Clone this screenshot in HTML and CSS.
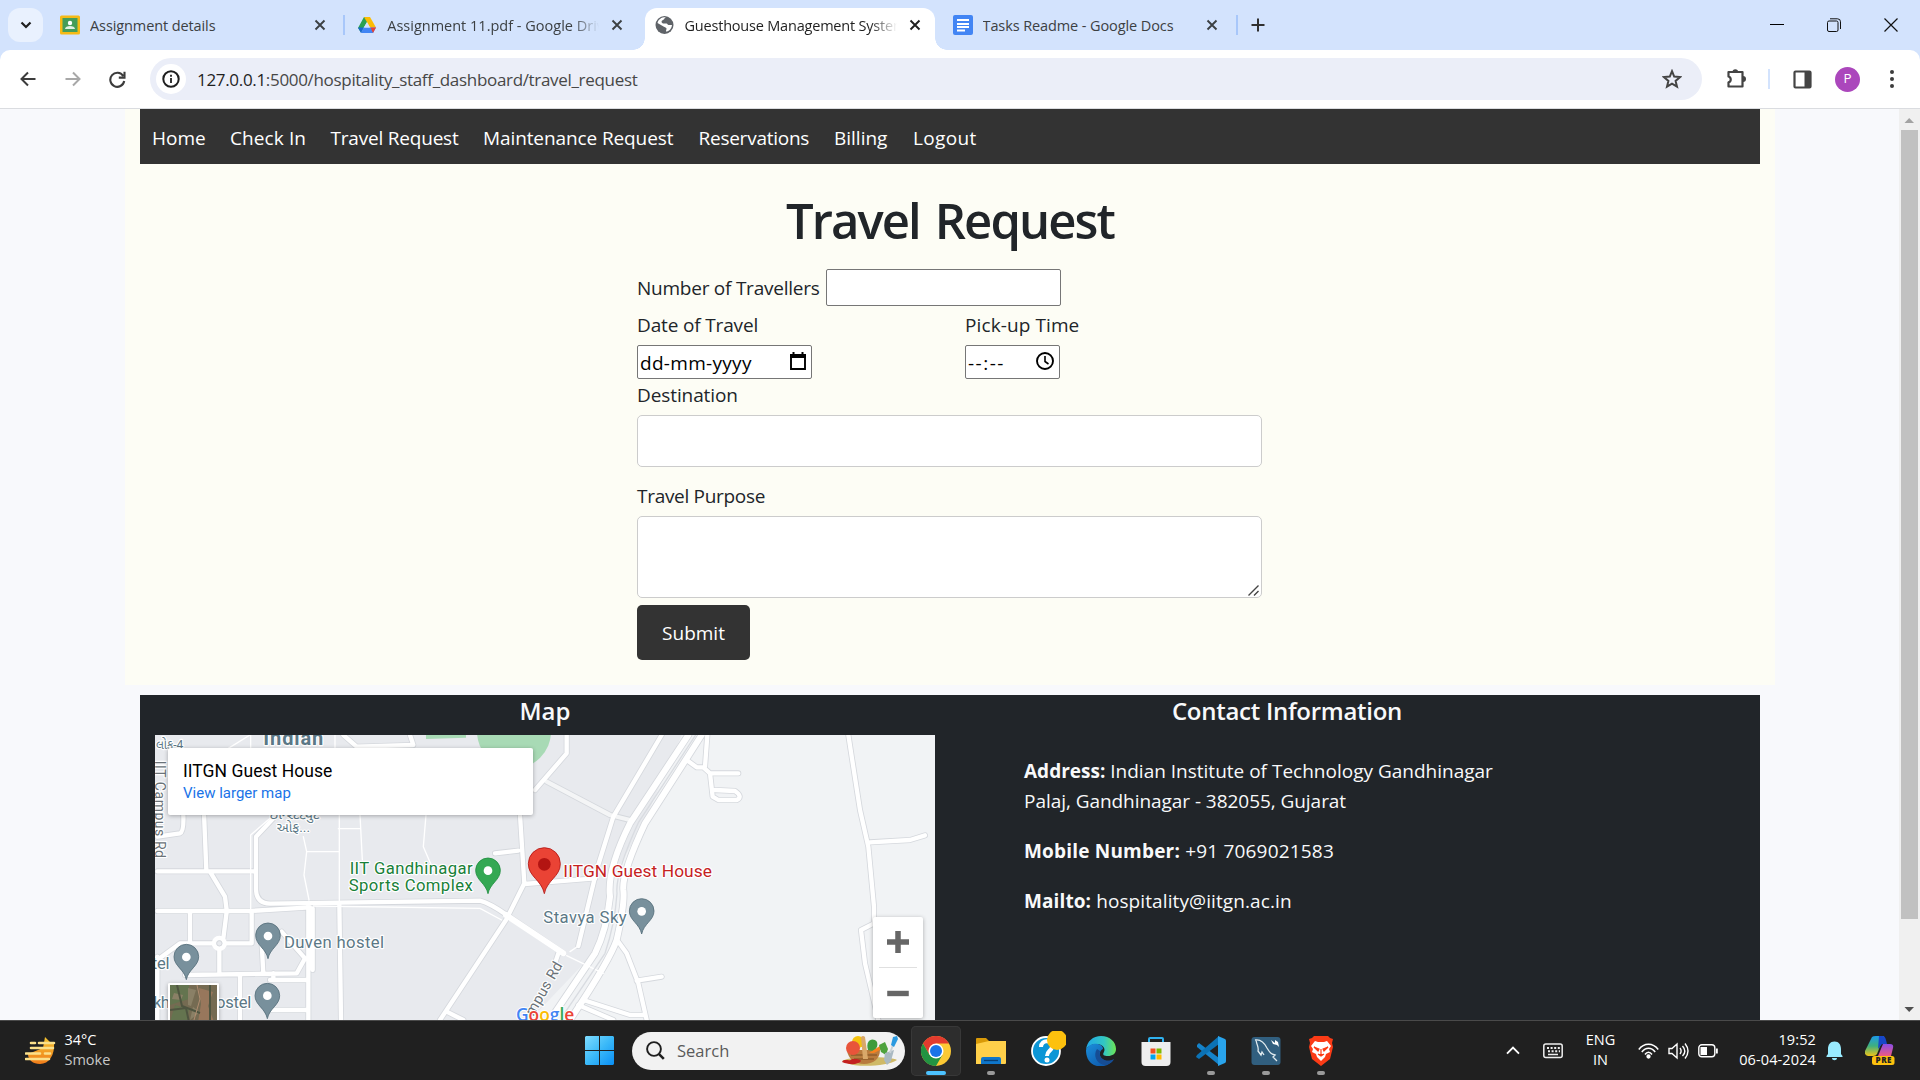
FILE: index.html
```html
<!DOCTYPE html>
<html lang="en">
<head>
<meta charset="utf-8">
<title>Guesthouse Management System</title>
<link rel="stylesheet" href="styles.css">
</head>
<body>
<div class="screen">
  <header class="tabstrip">
    <div class="tab-search"><svg width="12" height="8" viewBox="0 0 12 8"><path d="M1.5 1.5 6 6l4.500-4.500" fill="none" stroke="#1f1f1f" stroke-width="2.200"/></svg></div>
    <div class="tab">
      <svg class="fav" width="20" height="20" viewBox="0 0 20 20"><rect width="20" height="19" y=".5" rx="1.500" fill="#f5ba15"/><rect x="2.500" y="3" width="15" height="14" fill="#459d58"/><circle cx="10" cy="8" r="2.200" fill="#fff"/><path d="M5 14c0-4 10-4 10 0z" fill="#e3f1e5"/></svg>
      <span class="tab-title t1">Assignment details</span>
      <svg class="x" viewBox="0 0 12 12"><path d="M1.500 1.500l9 9M10.500 1.500l-9 9"/></svg>
    </div>
    <div class="tab sep">
      <svg class="fav" width="20" height="20" viewBox="0 0 20 20"><path d="M7 2h6l-6 10-3 5.500L1 13z" fill="#2aa150"/><path d="M7 2h6l6 10.500h-6z" fill="#fbbc04"/><path d="M6.600 12.500H19L16 18H4z" fill="#4285f4"/><path d="M1 12.500h5.600L4 18z" fill="#1967d2"/><path d="M13.500 12.500H19L16 18z" fill="#ea4335"/><path d="M10 7.200l3 5.300H7z" fill="#d3e3fd"/></svg>
      <span class="tab-title fade t2">Assignment 11.pdf - Google Drive</span>
      <svg class="x" viewBox="0 0 12 12"><path d="M1.500 1.500l9 9M10.500 1.500l-9 9"/></svg>
    </div>
    <div class="tab active">
      <svg class="fav" width="20" height="20" viewBox="0 0 20 20"><circle cx="9.500" cy="10" r="9" fill="#5f6368"/><path d="M11 2c-2 1-1 2-3 3-2 .5-2 3 0 3.500h3.500c1 0 1 1.500 2 1.500h3.500c-.5 4-3 6.500-6 6.500 0-2 1.500-3-.5-4l-2-1-6-3.500C3 5 6 2 11 2z" fill="#fff"/><path d="M9 6.500c1-1 2-1 3-3l2.500 1.500-1.500 3-2-.5z" fill="#5f6368"/></svg>
      <span class="tab-title fade t3">Guesthouse Management System</span>
      <svg class="x dark" viewBox="0 0 12 12"><path d="M1.500 1.500l9 9M10.500 1.500l-9 9"/></svg>
    </div>
    <div class="tab last">
      <svg class="fav" width="20" height="20" viewBox="0 0 20 20"><rect width="20" height="20" rx="2" fill="#4285f4"/><path d="M4 5h12M4 9h12M4 12h12M4 15.500h8" stroke="#fff" stroke-width="1.900"/></svg>
      <span class="tab-title t4">Tasks Readme - Google Docs</span>
      <svg class="x" viewBox="0 0 12 12"><path d="M1.500 1.500l9 9M10.500 1.500l-9 9"/></svg>
    </div>
    <div class="newtab sep"><svg width="14" height="14" viewBox="0 0 14 14"><path d="M7 .5v13M.5 7h13" stroke="#303030" stroke-width="2"/></svg></div>
    <div class="wincontrols">
      <svg width="14" height="14" viewBox="0 0 14 14"><path d="M0 6.500h14" stroke="#000"/></svg>
      <svg width="14" height="14" viewBox="0 0 14 14" fill="none" stroke="#111"><rect x=".5" y="3" width="10.500" height="10.500" rx="1.500"/><path d="M3 .8h7.500a3 3 0 0 1 3 3V11"/></svg>
      <svg width="14" height="14" viewBox="0 0 14 14"><path d="M.5.5l13 13M13.500.5l-13 13" stroke="#111" stroke-width="1.200"/></svg>
    </div>
  </header>

  <div class="toolbar-bg">
  <div class="toolbar">
    <div class="navicons">
      <svg width="16" height="16" viewBox="0 0 16 16" fill="none" stroke="#3c3c3c" stroke-width="2"><path d="M15.500 8H2M8 1.500 1.500 8 8 14.500"/></svg>
      <svg width="16" height="16" viewBox="0 0 16 16" fill="none" stroke="#a8a8a8" stroke-width="2"><path d="M.5 8H14M8 1.500 14.500 8 8 14.500"/></svg>
      <svg width="17" height="17" viewBox="0 0 17 17" fill="none" stroke="#3c3c3c" stroke-width="2.100"><path d="M14.200 5A7 7 0 1 0 15.200 10M15.500.8v5.800H9.800"/></svg>
    </div>
    <div class="omnibox">
      <div class="info"><svg width="18" height="18" viewBox="0 0 18 18"><circle cx="9" cy="9" r="7.700" fill="none" stroke="#1f1f1f" stroke-width="2"/><path d="M9 8v5M9 4.700v2" stroke="#1f1f1f" stroke-width="1.800"/></svg></div>
      <span class="url"><b>127.0.0.1</b>:5000/hospitality_staff_dashboard/travel_request</span>
      <svg class="star" width="20" height="20" viewBox="0 0 20 20"><path d="M10 2.200l2.200 5.400 5.900.5-4.500 3.800 1.400 5.800L10 14.700l-5 3 1.400-5.800L1.900 8.100l5.900-.5z" fill="none" stroke="#444" stroke-width="2"/></svg>
    </div>
    <svg class="puzzle" width="22" height="22" viewBox="0 0 22 22"><path d="M3.500 4h14v14.500h-14v-4.200a3 3 0 0 0 0-5.800z" fill="none" stroke="#444" stroke-width="2.200" stroke-linejoin="round"/><path d="M7.500 4a2.800 2.800 0 0 1 5.600 0zM18 8a2.800 2.800 0 0 1 0 6z" fill="#444"/></svg>
    <i class="tsep"></i>
    <svg class="panel" width="19" height="19" viewBox="0 0 19 19"><rect x="1.500" y="1.500" width="16" height="16" rx="1" fill="none" stroke="#444" stroke-width="2.200"/><path d="M11.500 1h6v17h-6z" fill="#444"/></svg>
    <span class="avatar">P</span>
    <svg class="dots" width="4" height="18" viewBox="0 0 4 18"><g fill="#3c3c3c"><circle cx="2" cy="2" r="2"/><circle cx="2" cy="9" r="2"/><circle cx="2" cy="16" r="2"/></g></svg>
  </div>
  </div>

  <div class="viewport">
    <div class="page">
      <main class="container">
        <nav class="nav">
          <a class="n1">Home</a><a class="n2">Check In</a><a class="n3">Travel Request</a><a class="n4">Maintenance Request</a><a class="n5">Reservations</a><a class="n6">Billing</a><a class="n7">Logout</a>
        </nav>
        <h1>Travel Request</h1>
        <form class="form">
          <div class="row"><label class="l1">Number of Travellers</label><input class="num" type="text"></div>
          <div class="pair">
            <div>
              <label class="l2">Date of Travel</label>
              <div class="native date"><span class="dval">dd-mm-yyyy</span><svg width="18" height="20" viewBox="0 0 18 20"><path d="M2 4h14v14H2z" fill="none" stroke="#000" stroke-width="1.900"/><path d="M1 3h16v4H1zM3.500 1h2v3h-2zM12.500 1h2v3h-2z"/></svg></div>
            </div>
            <div>
              <label class="l3">Pick-up Time</label>
              <div class="native time"><span class="tval">--:--</span><svg width="20" height="20" viewBox="0 0 20 20" fill="none" stroke="#000" stroke-width="1.900"><circle cx="10" cy="10" r="8"/><path d="M10 5v5.500l3.500 2.500" stroke-width="1.600"/></svg></div>
            </div>
          </div>
          <label class="l4">Destination</label>
          <input class="field" type="text">
          <label class="l5 purpose">Travel Purpose</label>
          <div class="areawrap">
            <textarea class="field area"></textarea>
            <svg class="grip" width="11" height="11" viewBox="0 0 11 11"><path d="M.5 10.500l10-10M6 10.500l4.500-4.500" stroke="#444" stroke-width="1.400"/></svg>
          </div>
          <button class="submit" type="button">Submit</button>
        </form>
      </main>

      <footer class="footer">
        <section class="mapcol">
          <h5 class="h-map">Map</h5>
          <div class="map">
            <svg class="mapsvg" viewBox="75 135 2340 855" preserveAspectRatio="none">
              <rect x="75" y="135" width="2340" height="855" fill="#f1f3f5"/>
              <path d="M75 135H1655L1540 400 1450 560 1400 780 1200 990H75z" fill="#e8eaee"/>
              <path d="M888 135h120v8l-120 4z" fill="#a8dab5"/>
              <circle cx="1152" cy="125" r="111" fill="#a8dab5"/>
              <g class="road-edge">
                <path d="M82 440L150 430Q162 425 160 375M222 370L229 540M82 544H375M240 545L285 620 290 660M430 385L378 440V600Q380 640 420 641L1050 632Q1080 640 1130 675L1300 790M82 663H360L540 652M180 665V760M290 665L280 745M268 775V850M165 855L500 850 525 805 455 725M365 665V760H150L82 810M395 760L400 850M535 640V990M548 655V840M628 640L633 990M420 870H530M330 860V990M82 800V990M1170 375L1183 580 1128 690 930 990M1095 490L1165 482M1183 582L1395 565M1310 135V190L1215 300M640 135L680 170 850 165 840 135M950 965L1000 990M430 850V870M415 960H535M1250 275L1440 375 1500 390"/>
                <path d="M1595 135L1450 380 1400 540 1345 768M1670 210L1700 232H1720L1740 250H1825M1732 135L1725 230M1740 250L1748 320 1765 330H1820Q1840 320 1815 303L1755 300M2155 135L2190 360 2215 470 2232 650V700L2193 720 2205 820 2245 990M2220 457L2340 450 2385 436M1465 755L1490 790 1525 880 1550 990M1520 872L1595 860M1275 820L1285 790M1360 930L1500 975H1540M1345 945L1450 990"/>
                <path stroke-width="23" d="M1675 135L1500 400Q1430 540 1440 620 1430 720 1395 790L1260 990M1715 135L1545 400Q1475 550 1480 600 1485 640 1460 750 1440 810 1320 990"/>
              </g>
              <g class="road">
                <path stroke="#f4f5f6" d="M1250 275L1440 375 1500 390"/>
                <path d="M82 440L150 430Q162 425 160 375M222 370L229 540M82 544H375M240 545L285 620 290 660M430 385L378 440V600Q380 640 420 641L1050 632Q1080 640 1130 675M82 663H360L540 652M180 665V760M290 665L280 745M268 775V850M165 855L500 850 525 805 455 725M365 665V760H150L82 810M395 760L400 850M535 640V990M548 655V840M628 640L633 990M420 870H530M330 860V990M82 800V990M1170 375L1183 580 1128 690 930 990M1095 490L1165 482M1183 582L1395 565M1310 135V190L1215 300M640 135L680 170 850 165 840 135M950 965L1000 990M430 850V870M415 960H535"/>
                <path d="M1595 135L1450 380 1400 540 1345 768M1732 135L1725 230M1670 210L1700 232H1720L1740 250H1825M1740 250L1748 320 1765 330H1820Q1840 320 1815 303L1755 300M2155 135L2190 360 2215 470 2232 650V700L2193 720 2205 820 2245 990M2220 457L2340 450 2385 436M1465 755L1490 790 1525 880 1550 990M1520 872L1595 860M1275 820L1285 790M1360 930L1500 975H1540M1345 945L1450 990"/>
                <path stroke-width="18" d="M1128 675L1300 790M1675 135L1500 400Q1430 540 1440 620 1430 720 1395 790L1260 990M1715 135L1545 400Q1475 550 1480 600 1485 640 1460 750 1440 810 1320 990"/>
                <path stroke-width="4" d="M628 375V640M690 375L697 510M625 416H690M520 440L530 485H625M530 485L522 555 537 630M888 375L880 470 910 540M362 665V435L420 385M362 135V175M615 135V175M360 135L295 175M550 648L1050 655 1115 690M1310 797L1420 850M1320 785L1345 768"/>
              </g>
              <circle cx="268" cy="760" r="16" fill="#e8eaee" stroke="#fff" stroke-width="14"/>
              <circle cx="268" cy="760" r="8" fill="#e8eaee" stroke="#d5d8dd" stroke-width="3"/>
              <path d="M1697 135L1525 398Q1455 550 1461 610 1455 700 1425 790L1290 990" fill="none" stroke="#d9dce1" stroke-width="4"/>
              <g class="lbl slate">
                <text x="400" y="166" font-size="60" font-weight="700" textLength="180">Indian</text>
                <text x="78" y="177" font-size="38" textLength="82" lengthAdjust="spacingAndGlyphs">લોક-4</text>
                <text x="418" y="387" font-size="38" textLength="150" lengthAdjust="spacingAndGlyphs">ઇન્સ્ટિટ્યુટ</text>
                <text x="440" y="426" font-size="40" textLength="100" lengthAdjust="spacingAndGlyphs">ઓફ...</text>
                <text x="462" y="773" font-size="50" textLength="300">Duven hostel</text>
                <text x="65" y="836" font-size="50" textLength="54">tel</text>
                <text x="70" y="954" font-size="50" textLength="50">kh</text>
                <text x="258" y="954" font-size="50" textLength="106">ostel</text>
                <text x="1240" y="700" font-size="50" textLength="250">Stavya Sky</text>
              </g>
              <g class="lbl gray">
                <text transform="translate(74 212) rotate(90)" font-size="42" textLength="292">IIT Campus Rd</text>
                <text transform="translate(1210 980) rotate(-60)" font-size="44" textLength="178">mpus Rd</text>
              </g>
              <g class="lbl green">
                <text x="659" y="552" font-size="50" textLength="369">IIT Gandhinagar</text>
                <text x="656" y="604" font-size="50" textLength="372">Sports Complex</text>
              </g>
              <g class="lbl red"><text x="1300" y="561" font-size="52" textLength="446">IITGN Guest House</text></g>
              <g fill="#78909c" stroke="#546e7a" stroke-width="2.500">
                <path d="M414 806C408 775 377 765 377 736a37 37 0 0 1 74 0C451 765 420 775 414 806z"/>
                <path d="M169 869C163 838 132 828 132 800a37 37 0 0 1 74 0C206 828 175 838 169 869z"/>
                <path d="M412 986C406 955 375 945 375 917a37 37 0 0 1 74 0C449 945 418 955 412 986z"/>
                <path d="M1535 732C1529 701 1498 691 1498 663a37 37 0 0 1 74 0C1572 691 1541 701 1535 732z"/>
              </g>
              <path d="M1074 611C1068 580 1037 570 1037 541a37 37 0 0 1 74 0C1111 570 1080 580 1074 611z" fill="#34a853" stroke="#1e8e3e" stroke-width="2.500"/>
              <path d="M1243 611C1235 570 1195 560 1195 521a48 48 0 0 1 96 0C1291 560 1251 570 1243 611z" fill="#ea4335" stroke="#b31412" stroke-width="2.500"/>
              <circle cx="1243" cy="523" r="19" fill="#b31412"/>
              <g fill="#fff"><circle cx="414" cy="738" r="13"/><circle cx="169" cy="801" r="13"/><circle cx="412" cy="917" r="13"/><circle cx="1535" cy="664" r="13"/><circle cx="1074" cy="542" r="13"/></g>
              <text class="google" x="1158" y="993" font-size="56" textLength="175" lengthAdjust="spacingAndGlyphs"><tspan fill="#4285f4">G</tspan><tspan fill="#ea4335">o</tspan><tspan fill="#fbbc04">o</tspan><tspan fill="#4285f4">g</tspan><tspan fill="#34a853">l</tspan><tspan fill="#ea4335">e</tspan></text>
            </svg>
            <div class="card"><div class="place">IITGN Guest House</div><div class="larger">View larger map</div></div>
            <div class="sat"><svg width="47" height="37" viewBox="0 0 47 37"><rect width="47" height="37" fill="#756b52"/><path d="M0 0h19v14L0 20zM5 20l14 4-2 13H0z" fill="#64744f"/><path d="M29 3l14 4-5 14 6 16H28l3-18z" fill="#98775c"/><path d="M18 3l8 2-5 16-3-1zM4 8l9 2-2 5-9-1zM23 22l7 5-10 8z" fill="#8a8066"/><path d="M0 25l16-2 3 14M40 0v37M7 0l5 21 18 7" stroke="#4f5540" stroke-width="2" fill="none"/><path d="M27 0l3 14-6 21" stroke="#b08d70" fill="none"/></svg></div>
            <div class="zoomctl">
              <svg width="50" height="50" viewBox="0 0 50 50"><path d="M25 14v22M14 25h22" stroke="#666" stroke-width="5.500"/></svg>
              <svg class="minus" width="38" height="50" viewBox="0 0 38 50"><path d="M8 26h22" stroke="#666" stroke-width="5.500"/></svg>
            </div>
          </div>
        </section>
        <section class="contact">
          <h5 class="h-contact">Contact Information</h5>
          <div class="info-text">
            <p><span class="c1"><b>Address:</b> Indian Institute of Technology Gandhinagar</span><br><span class="c2">Palaj, Gandhinagar - 382055, Gujarat</span></p>
            <p class="c3"><b>Mobile Number:</b> +91 7069021583</p>
            <p class="c4"><b>Mailto:</b> hospitality@iitgn.ac.in</p>
          </div>
        </section>
      </footer>
    </div>
    <div class="scrollbar">
      <svg width="21" height="21" viewBox="0 0 21 21"><path d="M5.500 14h9.500L10.200 9z" fill="#a3a3a3"/></svg>
      <div class="thumb"></div>
      <svg width="21" height="21" viewBox="0 0 21 21"><path d="M5.500 8h9.500l-4.800 5z" fill="#505050"/></svg>
    </div>
  </div>

  <div class="taskbar">
    <div class="weather">
      <svg width="31" height="30" viewBox="0 0 31 30"><defs><linearGradient id="sun" x2="0" y2="1"><stop stop-color="#f4c430"/><stop offset="1" stop-color="#f07c1a"/></linearGradient></defs><path d="M20 1l5 5 4 1c1 12-5 21-14 21C8 28 3 24 3 18l15-6z" fill="url(#sun)"/><path d="M6 7h4M14 7h15M6 12h22M1 17.500h14M20 17.500h5M1 23h23" stroke="#fbe08a" stroke-width="2.600" stroke-linecap="round"/></svg>
      <div class="wtext"><div class="w1">34°C</div><div class="w2">Smoke</div></div>
    </div>
    <div class="center">
      <svg class="start" width="29" height="29" viewBox="0 0 29 29"><defs><linearGradient id="win" x2="1" y2="1"><stop stop-color="#7fdcff"/><stop offset=".5" stop-color="#3bb9f8"/><stop offset="1" stop-color="#0a8ff5"/></linearGradient></defs><path d="M1 0h13v14H0V1zM15 0h13l1 1v13H15zM0 15h14v14H1l-1-1zM15 15h14v13l-1 1H15z" fill="url(#win)"/></svg>
      <div class="search">
        <svg width="19" height="19" viewBox="0 0 19 19" fill="none" stroke="#1f1f1f"><circle cx="8" cy="8" r="6.900" stroke-width="1.900"/><path d="M12.800 12.800l5 5" stroke-width="2.600"/></svg>
        <span class="stext">Search</span>
        <svg width="57" height="32" viewBox="0 0 57 32"><path d="M1 26c12-6 50-4 55-1-8 6-40 8-50 3z" fill="#cfb967"/><ellipse cx="17" cy="7" rx="6" ry="6" fill="#f4c20d"/><path d="M6 15h33c0 9-7 14-16 14S7 24 6 15z" fill="#b87b3e"/><path d="M10 20h26M13 24h20" stroke="#7d4e20"/><circle cx="12" cy="13" r="7" fill="#e8543a"/><path d="M27 15c-3-10 5-13 9-8 1 3 0 7-4 9z" fill="#3f9b3c"/><path d="M28 18l14-9 3 3-12 6z" fill="#f58220"/><path d="M22 24L20 2q2-2 4 0l3 22z" fill="#d9a86a"/><path d="M38 10l6-3 3 7-2 6-5-3z" fill="#4ea23d"/><path d="M44 18l9-3-3 11-4 4-3-5z" fill="#aab9c2"/><path d="M49 18l3-8" stroke="#c8d1d6" stroke-width="2"/><path d="M50 10l2-8 4-1 1 3-4 8z" fill="#2b9ae0"/><path d="M1 27c2-4 8 0 10-3 4 0 8 0 9 2-3 4-12 4-19 1z" fill="#c3201f"/></svg>
      </div>
      <div class="app chrome"><svg width="30" height="30" viewBox="0 0 30 30"><circle cx="15" cy="15" r="15" fill="#fcc934"/><path d="M2 7.500A15 15 0 0 1 28 7.500H15L8.500 18.750z" fill="#e33b2e"/><path d="M2 7.500A15 15 0 0 0 15 30l6.500-11.250L15 22 8.500 18.750z" fill="#229342"/><circle cx="15" cy="15" r="7.500" fill="#fff"/><circle cx="15" cy="15" r="6" fill="#1a73e8"/></svg><i class="bar"></i></div>
      <div class="app"><svg width="30" height="30" viewBox="0 0 30 30"><path d="M0 3q0-1 1-1h9l3 3v6H0z" fill="#d99a08"/><path d="M0 8l13-3h17v22q0 1-1 1H0z" fill="#ffd04a"/><path d="M5 28v-5q0-2 2-2h16q2 0 2 2v5z" fill="#0f76ca"/><path d="M8 24.500h14" stroke="#073f74" stroke-width="1.300"/></svg><i class="dot"></i></div>
      <div class="app"><svg width="40" height="40" viewBox="-5 -5 40 40"><circle cx="15" cy="15" r="14" fill="#0c96d6" stroke="#fff" stroke-width="1.800"/><path d="M10 11c0-8 12-7 11 0-.5 4-5 4-5 9" fill="none" stroke="#fff" stroke-width="4"/><circle cx="16" cy="24" r="2.500" fill="#fff"/><circle cx="26" cy="4" r="10" fill="#fdc10e"/></svg></div>
      <div class="app"><svg width="30" height="30" viewBox="0 0 30 30"><defs><linearGradient id="ed" x2="1"><stop stop-color="#20a7e8"/><stop offset=".6" stop-color="#32c6c4"/><stop offset="1" stop-color="#6de454"/></linearGradient><linearGradient id="ed2" x2="1" y2="1"><stop stop-color="#1b8fdc"/><stop offset="1" stop-color="#0b4da0"/></linearGradient></defs><path d="M0 14C1 5 7 0 15 0c9 0 15 6 15 13 0 5-4 7-8 7s-6-1-4-4c2-4-2-8-7-8-6 0-10 3-11 6z" fill="url(#ed)"/><path d="M0 14c2-5 7-7 12-6 4 1 5 3 5 5-5 2-5 12 6 12 2 0 4-1 5-2-6 9-16 8-20 6C2 26 0 20 0 14z" fill="url(#ed2)"/><path d="M11 13c-4 6-1 14 7 16 4 0 8-2 10-6-7 4-16 0-14-8z" fill="#164d94"/></svg></div>
      <div class="app"><svg width="30" height="30" viewBox="0 0 30 30"><path d="M8 8V3q0-1 1-1h12q1 0 1 1v5" fill="none" stroke="#2fb1ee" stroke-width="2"/><path d="M.5 6h29v20q0 4-4 4h-21q-4 0-4-4z" fill="#eee"/><path d="M9.500 12.500h5v5h-5z" fill="#f25022"/><path d="M15.500 12.500h5v5h-5z" fill="#7fba00"/><path d="M9.500 18.500h5v5h-5z" fill="#00a4ef"/><path d="M15.500 18.500h5v5h-5z" fill="#ffb900"/></svg></div>
      <div class="app"><svg width="30" height="30" viewBox="0 0 30 30"><path d="M1 9l2-2 20 15v7L1 11z" fill="#1583ca"/><path d="M1 19l22-19v8L3 23l-3-2z" fill="#0b72b5"/><path d="M22 0l7 3q1 .5 1 2v20q0 1.500-1 2l-7 3z" fill="#29a4ec"/></svg><i class="dot"></i></div>
      <div class="app"><svg width="30" height="30" viewBox="0 0 30 30"><rect x=".5" y="1" width="29" height="28" rx="3" fill="#315f7f"/><path d="M4 4c5-1 9 2 12 8 3 5 4 6 8 7l-2 2 4 4M5 4c1 6 3 7 2 11l3 4 1-3 2 3" fill="none" stroke="#e1ebef" stroke-width="1.300"/><path d="M20 4l2 4 4 1 2 2-1-5-3-2v3z" fill="#fff"/></svg><i class="dot"></i></div>
      <div class="app"><svg width="30" height="30" viewBox="0 0 30 30"><path d="M8 0h14l2 2 3 1-1 4 1 4-3 12-9 7-9-7L3 11l1-4-1-4 3-1z" fill="#fb3b16"/><path d="M9 5l3 1h6l3-1 4 5-2 3 1 3-4 2-1 3-4 4-4-4-1-3-4-2 1-3-2-3z" fill="#fff"/><path d="M8 11l5 2-1 2zM22 11l-5 2 1 2zM15 13v5M12 18l3 2 3-2" fill="#fb3b16" stroke="#fb3b16" stroke-width="1.200"/></svg><i class="dot"></i></div>
    </div>
    <div class="tray">
      <svg class="chev" width="14" height="9" viewBox="0 0 14 9"><path d="M1 7.700l6-6 6 6" fill="none" stroke="#fff" stroke-width="1.900"/></svg>
      <svg class="kb" width="20" height="16" viewBox="0 0 20 16"><rect x=".8" y="1" width="18.400" height="13.500" rx="2" fill="none" stroke="#eee" stroke-width="1.500"/><path d="M4 5h13M5 8.200h12" stroke="#eee" stroke-width="2" stroke-dasharray="2 1.600"/><path d="M5 11.500h10" stroke="#eee" stroke-width="1.500"/></svg>
      <div class="lang"><div>ENG</div><div>IN</div></div>
      <svg class="wifi" width="21" height="16" viewBox="0 0 21 16" fill="none" stroke="#fff" stroke-width="1.500"><path d="M.8 6.500C6-.5 15-.5 20.200 6.500M3.800 9c4-5 9.500-5 13.400 0M7 11.500c2-3 5-3 7 0"/><circle cx="10.500" cy="13.500" r="1.400" fill="#fff"/></svg>
      <svg class="spk" width="21" height="18" viewBox="0 0 21 18" fill="none" stroke="#fff" stroke-width="1.400"><path d="M1 6.500h3l5-4.500v14L4 11.500H1zM12 6c1.500 2 1.500 4 0 6M14.500 4c3 3.500 3 7 0 10M17 1.500c4 5 4 10 0 15"/></svg>
      <svg class="bat" width="20" height="14" viewBox="0 0 20 14"><rect x=".8" y=".8" width="16" height="12" rx="3" fill="none" stroke="#fff" stroke-width="1.400"/><path d="M2.500 3h6.500v8H2.500zM18 4.500h1.800v5H18z" fill="#fff"/></svg>
      <div class="clock"><div class="k1">19:52</div><div class="k2">06-04-2024</div></div>
      <svg class="bell" width="17" height="20" viewBox="0 0 17 20"><path d="M8.500.5C4 .5 2 4 2 8v5L.5 15v1h16v-1L15 13V8c0-4-2-7.500-6.500-7.500zM6 17h5c0 3-5 3-5 0z" fill="#99ebff"/></svg>
      <svg class="copilot" width="30" height="29" viewBox="0 0 30 29"><defs><linearGradient id="cp" x2="0" y2="1"><stop stop-color="#1c9bea"/><stop offset=".5" stop-color="#3fb07d"/><stop offset="1" stop-color="#f0c419"/></linearGradient><linearGradient id="cp2" x2="0" y2="1"><stop stop-color="#8a4de8"/><stop offset="1" stop-color="#ee5a80"/></linearGradient></defs><path d="M7 1q1-1 4-1h8L12 18q-1 2-4 2H3q-4-1-3-5z" fill="url(#cp)"/><path d="M14 0h4q2 0 3 4l1 4h-5l-4 5z" fill="#1747c9"/><path d="M18 8h7q4 0 3 4l-2 8H13z" fill="url(#cp2)"/><rect x="7" y="20" width="22.500" height="9" rx="2.500" fill="#fdc10e"/><text class="pre" x="10.500" y="27.300" textLength="16">PRE</text></svg>
    </div>
  </div>
</div>
</body>
</html>
```
FILE: styles.css
```css
* { box-sizing: border-box; }
body { margin: 0; font-family: "Open Sans", "Noto Sans", sans-serif; }
svg { display: block; flex: none; }
.screen { width: 1920px; height: 1080px; overflow: hidden; display: flex; flex-direction: column; }

/* Browser tab strip */
.tabstrip { height: 50px; flex: none; background: #d3e3fd; display: flex; align-items: center; padding-left: 8px; }
.tab-search { width: 35px; height: 34px; border-radius: 12px; background: #e9f1fe; display: flex; align-items: center; justify-content: center; margin-right: 3px; }
.tab { position: relative; width: 297.250px; height: 50px; padding: 0 17.500px 0 14px; display: flex; align-items: center; font-size: 14.500px; color: #3c4043; }
.tab .fav { margin-right: 10px; }
.tab-title { flex: 1; overflow: hidden; white-space: nowrap; letter-spacing: -.1px; }
.t2 { letter-spacing: 0; }
.t3 { letter-spacing: -.2px; }
.fade { -webkit-mask-image: linear-gradient(90deg, #000 185px, transparent 212px); mask-image: linear-gradient(90deg, #000 185px, transparent 212px); }
.x { width: 12px; height: 12px; margin-left: 12px; fill: none; stroke: #3c4043; stroke-width: 1.900; }
.x.dark { stroke: #1f1f1f; }
.sep::before { content: ""; position: absolute; left: 0; top: 15px; width: 2px; height: 20px; background: #a8c7fa; }
.active { height: 42px; align-self: flex-end; margin: 0 4px; width: 290px; padding: 0 14px 8px 10px; background: #fff; border-radius: 12px 12px 0 0; color: #1f1f1f; }
.active::before, .active::after { content: ""; position: absolute; bottom: 0; width: 12px; height: 12px; }
.active::before { left: -12px; background: radial-gradient(circle at 0 0, #d3e3fd 11.500px, #fff 12px); }
.active::after { right: -12px; background: radial-gradient(circle at 100% 0, #d3e3fd 11.500px, #fff 12px); }
.newtab { position: relative; height: 50px; padding-left: 15px; display: flex; align-items: center; flex: 1; }
.wincontrols { display: flex; gap: 43px; padding-right: 22px; }

/* Browser toolbar */
.toolbar-bg { height: 59px; flex: none; background: #d3e3fd; }
.toolbar { height: 59px; background: #fff; border-radius: 10px 10px 0 0; border-bottom: 1px solid #dadce0; display: flex; align-items: center; padding-left: 20px; }
.navicons { display: flex; align-items: center; gap: 28.500px; width: 130px; }
.omnibox { width: 1552px; height: 42px; border-radius: 21px; background: #ebeef8; display: flex; align-items: center; padding: 0 20px 0 6px; }
.info { width: 30px; height: 30px; border-radius: 50%; background: #fff; display: flex; align-items: center; justify-content: center; margin-right: 11px; }
.url { flex: 1; font-size: 17px; letter-spacing: -.320px; color: #474747; }
.url b { font-weight: 400; color: #1f1f1f; }
.puzzle { margin: 0 21px 0 23px; }
.tsep { width: 2px; height: 20px; background: #d3e3fd; }
.panel { margin: 0 23px; }
.avatar { width: 25px; height: 25px; border-radius: 50%; background: #ab47bc; color: #fff; font: 12px/25px Roboto, sans-serif; text-align: center; }
.dots { margin-left: 30px; }

/* Web page */
.viewport { height: 911px; flex: none; background: #f8f9fc; display: flex; overflow: hidden; }
.page { flex: 1; }
.scrollbar { width: 21px; background: #f0f0f0; display: flex; flex-direction: column; }
.thumb { width: 17px; height: 789px; margin: 0 2px auto; background: #c1c1c1; }
.container { width: 1650px; height: 576px; margin: 0 auto 10px 125px; padding: 0 15px; background: #fdfdf5; color: #212529; }
.nav { height: 55px; background: #333; color: #fff; display: flex; align-items: center; padding: 2px 0 0 12px; gap: 25px; font-size: 19px; white-space: nowrap; }
.n1 { width: 53px; }
.n2 { width: 75.500px; letter-spacing: .1px; }
.n3 { width: 127.500px; letter-spacing: -.2px; }
.n4 { width: 190.500px; letter-spacing: -.1px; }
.n5 { width: 110.500px; letter-spacing: -.250px; }
.n6 { width: 54px; }
.n7 { letter-spacing: .350px; }
h1 { margin: 26px 0 19px; text-align: center; font-size: 49px; line-height: 60px; font-weight: 600; letter-spacing: -1.900px; word-spacing: 4px; }
.form { width: 625px; margin-left: 497px; font-size: 19px; line-height: 30px; display: flex; flex-direction: column; }
label { display: block; white-space: nowrap; }
.row { height: 37px; display: flex; align-items: center; gap: 6px; }
.row label { width: 183px; }
.l1 { letter-spacing: -.240px; }
.l2 { letter-spacing: -.150px; }
.l3 { letter-spacing: .1px; }
.l4 { letter-spacing: -.1px; }
.l5 { letter-spacing: -.3px; }
.dval { letter-spacing: .3px; }
.tval { letter-spacing: 1.500px; }
.num { width: 235px; height: 37px; border: 1px solid #767676; border-radius: 2px; background: #fff; }
.pair { margin-top: 4px; display: grid; grid-template-columns: 328px 1fr; }
.native { margin-top: 5px; height: 34px; border: 1px solid #767676; border-radius: 2px; background: #fff; color: #000; display: flex; align-items: center; justify-content: space-between; padding: 2px 4px 0 2px; }
.native svg { margin-top: -4px; }
.date { width: 175px; }
.time { width: 95px; }
.pair + label { margin-top: 1px; }
.field { display: block; margin: 5px 0 0; width: 625px; height: 52px; border: 1px solid #ccc; border-radius: 5px; background: #fff; }
.purpose { margin-top: 14px; }
.areawrap { position: relative; }
.area { height: 82px; resize: none; }
.grip { position: absolute; right: 3px; bottom: 2px; }
.submit { margin-top: 7px; width: 113px; height: 55px; border: 0; border-radius: 5px; background: #333; color: #fff; font: 19px "Open Sans", sans-serif; }

/* Footer */
.footer { margin-left: 140px; width: 1620px; height: 325px; background: #212529; color: #f8f9fa; display: flex; font-size: 19px; line-height: 30px; }
h5 { margin: 1px 0 9px; text-align: center; font-size: 24px; line-height: 30px; font-weight: 600; white-space: nowrap; }
.mapcol { width: 810px; padding: 0 15px; }
.map { position: relative; height: 285px; overflow: hidden; }
.mapsvg { width: 780px; height: 285px; }
.road-edge { fill: none; stroke: #d5d8dd; stroke-width: 18; stroke-linejoin: round; stroke-linecap: round; }
.road { fill: none; stroke: #fff; stroke-width: 13; stroke-linejoin: round; stroke-linecap: round; }
.lbl { font-family: Roboto, "Noto Sans Gujarati", sans-serif; stroke: #fff; stroke-width: 7; paint-order: stroke; stroke-linejoin: round; }
.slate { fill: #5b7886; }
.gray { fill: #6b7378; }
.green { fill: #188038; }
.red { fill: #c5221f; }
.google { font-family: "Open Sans", sans-serif; font-weight: 600; stroke: #fff; stroke-width: 6; paint-order: stroke; }
.card { position: absolute; left: 13px; top: 13px; width: 365px; height: 67px; background: #fff; border-radius: 2px; box-shadow: 0 1px 4px rgba(0,0,0,.3); padding: 11px 15px; font-family: Roboto, sans-serif; white-space: nowrap; }
.place { font-size: 17.500px; line-height: 24px; letter-spacing: .050px; color: #000; }
.larger { font-size: 15px; line-height: 20px; color: #1a73e8; }
.sat { position: absolute; left: 13px; top: 248px; border: 2px solid #fff; border-bottom: 0; border-radius: 2px; box-shadow: 0 1px 4px rgba(0,0,0,.3); }
.zoomctl { position: absolute; left: 718px; top: 182px; width: 50px; height: 101px; background: #fff; border-radius: 2px; box-shadow: 0 1px 4px rgba(0,0,0,.3); }
.minus { margin: 0 6px; border-top: 1px solid #e0e0e0; }
.contact { width: 810px; }
.contact h5 { width: 674px; margin-bottom: 30px; letter-spacing: -.270px; }
.info-text { padding-left: 74px; white-space: nowrap; }
.info-text p { margin: 0 0 20px; }
.c2 { letter-spacing: -.050px; }
.c3 { letter-spacing: .190px; }
.c4 { letter-spacing: .1px; }

/* Windows taskbar */
.taskbar { height: 60px; flex: none; background: #202020; border-top: 1px solid #4a4a4a; display: flex; align-items: center; color: #fff; font-size: 14.500px; line-height: 20px; white-space: nowrap; }
.wtext, .lang, .clock { margin-top: -2px; }
.weather { width: 585px; padding-left: 25px; display: flex; align-items: center; gap: 8.500px; }
.w2 { color: #c8c8c8; }
.center { display: flex; align-items: center; }
.search { margin: 0 3.500px 0 18px; width: 273px; height: 38px; border-radius: 19px; background: #f2f2f2; color: #5a5a5a; display: flex; align-items: center; padding: 0 7px 0 14px; }
.stext { flex: 1; margin-left: 12px; font-size: 16.500px; }
.app { position: relative; width: 55px; height: 50px; display: flex; align-items: center; justify-content: center; }
.chrome { width: 50px; margin: 0 2.500px; background: #2d2d2d; border-radius: 5px; box-shadow: inset 0 0 0 1px #383838; }
.bar, .dot { position: absolute; bottom: 1px; border-radius: 2px; }
.bar { width: 20px; height: 4px; background: #4cc2ff; }
.dot { width: 8px; height: 4px; background: #9a9a9a; }
.tray { flex: 1; display: flex; align-items: center; padding-left: 157px; }
.kb { margin-left: 23px; }
.lang { width: 40px; margin-left: 18px; text-align: center; }
.wifi { margin-left: 17px; }
.spk { margin-left: 9px; }
.bat { margin-left: 9px; }
.clock { width: 98.500px; text-align: right; letter-spacing: .120px; }
.bell { margin-left: 10px; }
.copilot { margin-left: 22px; }
.pre { font: 800 8px "Open Sans", sans-serif; fill: #222; }
```
